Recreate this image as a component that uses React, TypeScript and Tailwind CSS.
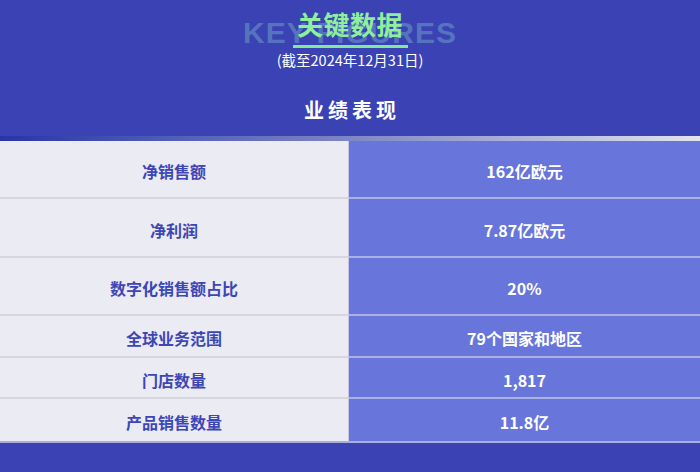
import React from "react";

const rows: [string, string, string][] = [
  ["净销售额", "162亿欧元", "h-[58px]"],
  ["净利润", "7.87亿欧元", "h-[59px]"],
  ["数字化销售额占比", "20%", "h-[58px]"],
  ["全球业务范围", "79个国家和地区", "h-[42px]"],
  ["门店数量", "1,817", "h-[41px]"],
  ["产品销售数量", "11.8亿", "h-[42px]"],
];

export default function App() {
  return (
    <div
      className="w-[700px] h-[472px] bg-[#3a42b4] flex flex-col overflow-hidden"
      style={{ fontFamily: '"Noto Sans CJK SC", "Noto Sans", sans-serif' }}
    >
      <div className="h-[136px] flex flex-col items-center">
        <div className="relative h-[48px] w-full flex justify-center">
          <div
            className="absolute top-[15px] left-0 right-0 text-center text-[30px] leading-[36px] tracking-[1px] font-bold text-[#5574bd]"
            style={{ fontFamily: '"Liberation Sans", Arial, sans-serif' }}
          >
            KEY FIGURES
          </div>
          <div className="relative flex flex-col items-center pt-[7px]">
            <div className="text-[26px] leading-[34px] font-bold text-[#8ff09b] tracking-[0.5px]">
              关键数据
            </div>
            <div className="mt-[4px] h-[3px] w-[115px] bg-[#80e99a]" />
          </div>
        </div>
        <div className="mt-[2px] text-[14.5px] leading-[20px] text-white">
          (截至2024年12月31日)
        </div>
        <div className="mt-[28px] text-[20px] leading-[24px] font-bold text-white tracking-[4px] pl-[4px]">
          业绩表现
        </div>
      </div>
      <div className="h-[5px] bg-gradient-to-r from-[#2a33a6] via-[#7f86c4] to-[#e2e4ec]" />
      <div className="flex flex-col border-b-2 border-[#aab0de]">
        {rows.map(([label, value, h], i) => (
          <div key={i} className={`flex ${h}`}>
            <div
              className={`w-[349px] bg-[#ebebf4] flex items-center justify-center pt-[4px] text-[16px] font-bold text-[#3d46b7] border-r border-[#c3c6e6] ${
                i < rows.length - 1 ? "border-b-2 border-b-[#d6d6de]" : ""
              }`}
            >
              {label}
            </div>
            <div
              className={`flex-1 bg-[#6875da] flex items-center justify-center pt-[4px] text-[16px] font-semibold text-white ${
                i < rows.length - 1 ? "border-b-2 border-b-[#aab1e6]" : ""
              }`}
            >
              {value}
            </div>
          </div>
        ))}
      </div>
    </div>
  );
}
